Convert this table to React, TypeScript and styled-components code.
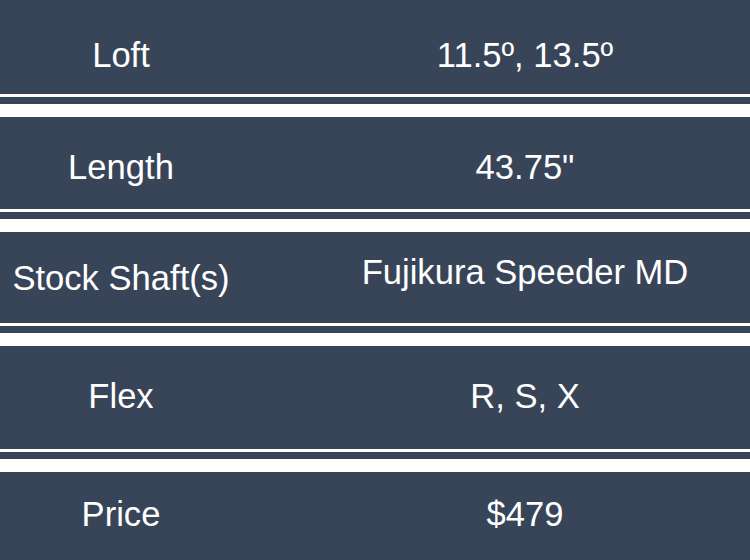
import styled, { createGlobalStyle } from "styled-components";

const GlobalStyle = createGlobalStyle`
	html, body {
		margin: 0;
		padding: 0;
		background: #384558;
	}
	body {
		width: 750px;
		height: 560px;
		overflow: hidden;
		font-family: "Liberation Sans", Arial, sans-serif;
	}
`;

const Table = styled.div`
	display: flex;
	flex-direction: column;
	width: 750px;
`;

const Row = styled.div<{ h: number }>`
	display: grid;
	grid-template-columns: 242px 1fr;
	height: ${(props) => props.h}px;
	background: #384558;
	border-bottom: 3px solid #ffffff;
`;

const Separator = styled.div`
	height: 7px;
	background: #384558;
	border-bottom: 13px solid #ffffff;
`;

const Cell = styled.div<{ top: number; shift?: number }>`
	padding-top: ${(props) => props.top}px;
	padding-left: ${(props) => props.shift ?? 0}px;
	text-align: center;
	color: #ffffff;
	font-size: 34.6px;
	line-height: 34px;
	white-space: nowrap;
`;

const LastRow = styled(Row)`
	border-bottom: none;
	height: auto;
	min-height: ${(props) => props.h}px;
`;

type Spec = {
	label: string;
	value: string;
	height: number;
	labelTop: number;
	valueTop: number;
};

const specs: Spec[] = [
	{ label: "Loft", value: "11.5º, 13.5º", height: 94, labelTop: 38, valueTop: 38 },
	{ label: "Length", value: "43.75\"", height: 92, labelTop: 33, valueTop: 33 },
	{ label: "Stock Shaft(s)", value: "Fujikura Speeder MD", height: 91, labelTop: 29, valueTop: 23 },
	{ label: "Flex", value: "R, S, X", height: 103, labelTop: 33, valueTop: 33 },
	{ label: "Price", value: "$479", height: 88, labelTop: 25, valueTop: 25 },
];

const App = (): JSX.Element => {
	return (
		<>
			<GlobalStyle />
			<Table>
				{specs.map((s, i) => {
					const last = i === specs.length - 1;
					const RowComp = last ? LastRow : Row;
					return (
						<div key={s.label}>
							<RowComp h={s.height}>
								<Cell top={s.labelTop}>{s.label}</Cell>
								<Cell top={s.valueTop} shift={58}>
									{s.value}
								</Cell>
							</RowComp>
							{!last && <Separator />}
						</div>
					);
				})}
			</Table>
		</>
	);
};

export default App;
